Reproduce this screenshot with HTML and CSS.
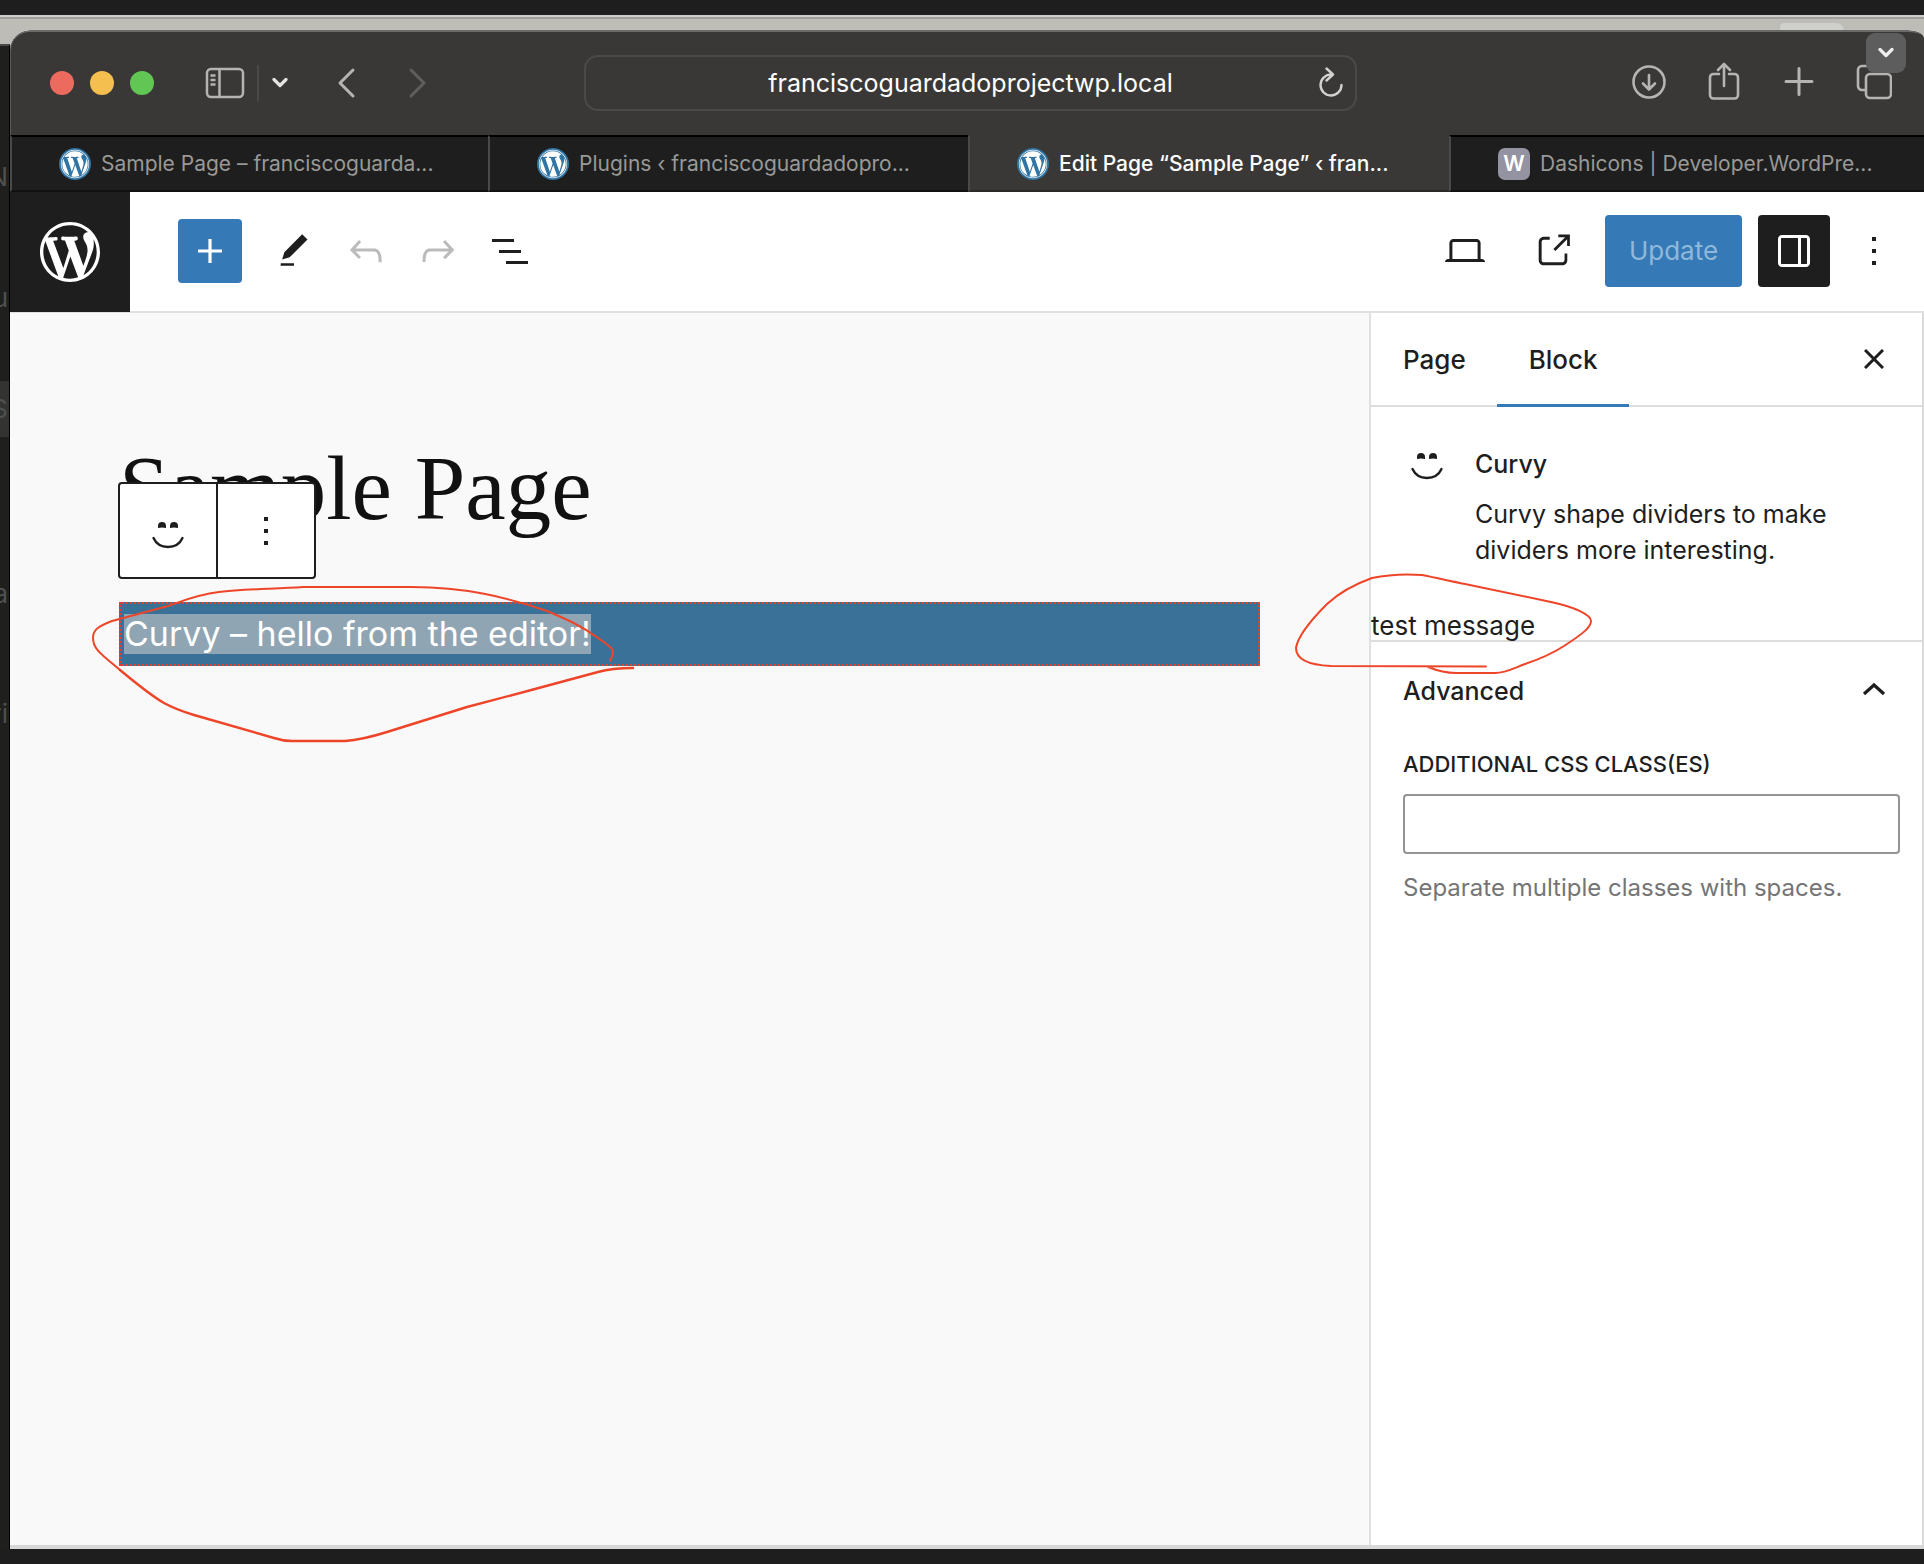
FILE: index.html
```html
<!DOCTYPE html>
<html lang="en">
<head>
<meta charset="utf-8">
<title>Edit Page “Sample Page”</title>
<link rel="stylesheet" href="styles.css">
</head>
<body>
<svg class="defs" aria-hidden="true">
  <symbol id="wp" viewBox="0 0 24 24"><path fill="currentColor" d="M12.158 12.786L9.46 20.625a8.984 8.984 0 0 0 5.526-.144.852.852 0 0 1-.065-.124zM3.009 12a8.993 8.993 0 0 0 5.067 8.092L3.788 8.341A8.952 8.952 0 0 0 3.009 12zm15.06-.454c0-1.112-.399-1.881-.741-2.48-.456-.741-.883-1.368-.883-2.109 0-.826.627-1.596 1.51-1.596.04 0 .078.005.116.007A8.963 8.963 0 0 0 12 3.009a8.982 8.982 0 0 0-7.512 4.052c.211.007.41.011.579.011.94 0 2.396-.114 2.396-.114.484-.028.541.684.057.741 0 0-.487.057-1.029.085l3.274 9.739 1.968-5.901-1.401-3.838c-.484-.028-.943-.085-.943-.085-.485-.029-.428-.769.057-.741 0 0 1.484.114 2.368.114.94 0 2.397-.114 2.397-.114.485-.028.542.684.057.741 0 0-.488.057-1.029.085l3.249 9.665.897-2.996c.456-1.169.684-2.137.684-2.907zm1.82-3.86c.039.286.06.593.06.924 0 .912-.171 1.938-.684 3.22l-2.746 7.94A8.991 8.991 0 0 0 20.991 12a8.95 8.95 0 0 0-1.102-4.314zM12 2C6.486 2 2 6.486 2 12s4.486 10 10 10 10-4.486 10-10S17.514 2 12 2zm0 19.542c-5.26 0-9.542-4.281-9.542-9.542S6.74 2.458 12 2.458 21.542 6.739 21.542 12 17.26 21.542 12 21.542z"/></symbol>
  <symbol id="wpbold" viewBox="-2 -2 24 24"><path fill="currentColor" d="M20 10c0-5.510-4.490-10-10-10C4.480 0 0 4.490 0 10c0 5.520 4.480 10 10 10 5.510 0 10-4.480 10-10zM7.780 15.370L4.370 6.220c.550-.020 1.170-.080 1.170-.080.500-.060.440-1.130-.060-1.110 0 0-1.450.110-2.370.110-.180 0-.370 0-.580-.010C4.120 2.690 6.870 1.110 10 1.110c2.330 0 4.450.870 6.050 2.340-.680-.110-1.650.390-1.650 1.580 0 .740.450 1.360.900 2.100.350.610.550 1.360.550 2.460 0 1.490-1.400 5-1.400 5l-3.030-8.370c.540-.020.820-.170.820-.170.500-.050.440-1.250-.060-1.220 0 0-1.440.120-2.380.120-.870 0-2.330-.120-2.330-.120-.500-.030-.560 1.200-.060 1.220l.920.080 1.260 3.410zM17.410 10c.240-.640.740-1.870.430-4.250.700 1.290 1.050 2.710 1.050 4.250 0 3.290-1.730 6.240-4.400 7.780.970-2.590 1.940-5.200 2.920-7.780zM6.100 18.090C3.120 16.650 1.110 13.530 1.110 10c0-1.300.230-2.480.720-3.590C3.250 10.300 4.670 14.200 6.100 18.090zm4.030-6.630l2.580 6.980c-.860.290-1.760.450-2.710.450-.790 0-1.570-.110-2.290-.330.810-2.380 1.620-4.740 2.420-7.100z"/></symbol>
  <symbol id="smile" viewBox="0 0 48 48"><path fill="currentColor" d="M14 21v-2a4 4 0 0 1 8 0v2q-4-1-8 0zM26 21v-2a4 4 0 0 1 8 0v2q-4-1-8 0z"/><path fill="none" stroke="currentColor" stroke-width="2.400" stroke-linecap="round" d="M9.500 31C15 43 33 43 38.500 31"/></symbol>
  <symbol id="dots" viewBox="0 0 24 24"><path fill="currentColor" d="M13 19h-2v-2h2v2zm0-6h-2v-2h2v2zm0-6h-2V5h2v2z"/></symbol>
</svg>
<div class="desktop">
  <i class="peek"></i>
  <aside class="behind" aria-hidden="true">
    <span class="ghost g1">N</span><span class="ghost g2">u</span><span class="ghost g3 lit">S</span><span class="ghost g4">a</span><span class="ghost g5">ri</span>
  </aside>
  <div class="window">
    <header class="chrome">
      <div class="left">
        <div class="lights"><i class="red"></i><i class="yellow"></i><i class="green"></i></div>
        <button class="tool side" aria-label="Sidebar"><svg width="40" height="32" viewBox="0 0 40 32"><g fill="none" stroke="currentColor" stroke-width="2.500"><rect x="2" y="2" width="36" height="28" rx="4"/><path d="M14.500 2v28M5.500 8.500h5M5.500 13h5M5.500 17.500h5" /></g></svg></button>
        <span class="rule"></span>
        <button class="tool bright" aria-label="Tab groups"><svg width="16" height="12" viewBox="0 0 16 12"><path d="M2 2.500l6 6 6-6" fill="none" stroke="currentColor" stroke-width="3.200" stroke-linecap="round" stroke-linejoin="round"/></svg></button>
        <button class="tool back" aria-label="Back"><svg width="20" height="32" viewBox="0 0 20 32"><path d="M17 3L4 16l13 13" fill="none" stroke="currentColor" stroke-width="3" stroke-linecap="round" stroke-linejoin="round"/></svg></button>
        <button class="tool forward" aria-label="Forward"><svg width="20" height="32" viewBox="0 0 20 32"><path d="M3 3l13 13L3 29" fill="none" stroke="currentColor" stroke-width="3" stroke-linecap="round" stroke-linejoin="round"/></svg></button>
      </div>
      <div class="address">
        <input class="url" aria-label="Address" value="franciscoguardadoprojectwp.local">
        <button class="tool reload" aria-label="Reload"><svg width="28" height="32" viewBox="0 0 28 32"><path d="M14.500 7.500A10.500 10.500 0 1 0 24.500 18M9.500 1.500l6.500 6-6.500 6" fill="none" stroke="currentColor" stroke-width="2.400" stroke-linecap="round" stroke-linejoin="round"/></svg></button>
      </div>
      <div class="right">
        <button class="tool" aria-label="Downloads"><svg width="36" height="40" viewBox="0 0 36 40"><g fill="none" stroke="currentColor" stroke-width="2.600" stroke-linecap="round" stroke-linejoin="round"><circle cx="18" cy="20" r="15.500"/><path d="M18 13v14M12 21.500l6 6 6-6"/></g></svg></button>
        <button class="tool" aria-label="Share"><svg width="36" height="40" viewBox="0 0 36 40"><g fill="none" stroke="currentColor" stroke-width="2.600" stroke-linecap="round" stroke-linejoin="round"><path d="M13 12H7.500a3.500 3.500 0 0 0-3.500 3.500V33a3.500 3.500 0 0 0 3.500 3.500h21A3.500 3.500 0 0 0 32 33V15.500a3.500 3.500 0 0 0-3.500-3.500H23M18 24V2M12 8l6-6 6 6"/></g></svg></button>
        <button class="tool" aria-label="New tab"><svg width="36" height="40" viewBox="0 0 36 40"><path d="M18 6.500v26M5 19.500h26" fill="none" stroke="currentColor" stroke-width="3" stroke-linecap="round"/></svg></button>
        <button class="tool" aria-label="Tab overview"><svg width="36" height="40" viewBox="0 0 36 40"><g fill="none" stroke="currentColor" stroke-width="2.600"><rect x="10" y="12" width="25" height="24" rx="4"/><path d="M10 28H6a4 4 0 0 1-4-4V8a4 4 0 0 1 4-4h16a4 4 0 0 1 4 4v4"/></g></svg></button>
      </div>
      <button class="float" aria-label="Show more"><svg width="16" height="12" viewBox="0 0 16 12"><path d="M2 2.500l6 6 6-6" fill="none" stroke="currentColor" stroke-width="3.200" stroke-linecap="round" stroke-linejoin="round"/></svg></button>
    </header>
    <nav class="tabs">
      <a class="tab" href="#"><span class="fav"><svg><use href="#wp"/></svg></span><span class="name">Sample Page – franciscoguarda...</span></a>
      <a class="tab" href="#"><span class="fav"><svg><use href="#wp"/></svg></span><span class="name">Plugins ‹ franciscoguardadopro...</span></a>
      <a class="tab active" href="#"><span class="fav"><svg><use href="#wp"/></svg></span><span class="name">Edit Page “Sample Page” ‹ fran...</span></a>
      <a class="tab" href="#"><span class="fav letter">W</span><span class="name">Dashicons | Developer.WordPre...</span></a>
    </nav>
    <div class="bar">
      <a class="home" href="#" aria-label="View Pages"><svg width="72" height="72"><use href="#wpbold"/></svg></a>
      <div class="tools">
        <button class="icon insert" aria-label="Add block"><svg width="48" height="48" viewBox="0 0 24 24"><path fill="currentColor" d="M18 11.200h-5.200V6h-1.600v5.200H6v1.600h5.200V18h1.600v-5.200H18z"/></svg></button>
        <button class="icon" aria-label="Tools"><svg width="40" height="40" viewBox="0 0 24 24"><path fill="currentColor" d="M20.100 5.100L16.900 2 6.200 12.700l-1.300 4.400 4.500-1.300L20.100 5.100zM4 20.800h8v-1.500H4v1.500z"/></svg></button>
        <button class="icon off" aria-label="Undo"><svg width="48" height="48" viewBox="0 0 24 24"><path fill="currentColor" d="M18.300 11.700c-.6-.6-1.400-.9-2.300-.9H6.700l2.900-3.300-1.100-1-4.500 5L8.500 16l1-1-2.700-2.700H16c.5 0 .9.200 1.300.5 1 1 1 3.400 1 4.500v.3h1.500v-.2c0-1.500 0-4.300-1.500-5.700z"/></svg></button>
        <button class="icon off" aria-label="Redo"><svg width="48" height="48" viewBox="0 0 24 24"><path fill="currentColor" d="M15.600 6.500l-1.100 1 2.900 3.300H8c-.9 0-1.700.3-2.300.9-1.400 1.500-1.400 4.200-1.400 5.600v.2h1.500v-.3c0-1.100 0-3.500 1-4.500.3-.3.700-.5 1.300-.5h9.200L14.500 15l1.100 1.100 4.600-4.600-4.600-5z"/></svg></button>
        <button class="icon" aria-label="Document overview"><svg width="48" height="48" viewBox="0 0 24 24"><path fill="currentColor" d="M3 6h11v1.500H3V6Zm3.500 5.500h11V13h-11v-1.500ZM21 17H10v1.500h11V17Z"/></svg></button>
      </div>
      <div class="actions">
        <button class="icon wide" aria-label="Preview"><svg width="48" height="48" viewBox="0 0 24 24"><path fill="currentColor" d="M20.500 16h-.7V8c0-1.100-.9-2-2-2H6.200c-1.100 0-2 .900-2 2v8h-.7c-.8 0-1.500.7-1.500 1.500h20c0-.8-.7-1.500-1.500-1.500zM5.700 8c0-.3.200-.5.500-.5h11.600c.3 0 .5.200.5.500v8H5.700V8z"/></svg></button>
        <button class="icon wide" aria-label="View page"><svg width="44" height="44" viewBox="0 0 24 24"><path fill="currentColor" d="M18.200 17c0 .7-.6 1.200-1.200 1.200H7c-.7 0-1.200-.6-1.200-1.200V7c0-.7.6-1.200 1.200-1.200h3.200V4.200H7C5.500 4.200 4.200 5.500 4.200 7v10c0 1.500 1.200 2.800 2.800 2.800h10c1.500 0 2.800-1.200 2.800-2.800v-3.600h-1.500V17zM14.900 3v1.500h3.700l-6.400 6.400 1.100 1.100 6.400-6.400v3.700h1.500V3h-6.300z"/></svg></button>
        <button class="update">Update</button>
        <button class="icon settings" aria-label="Settings"><svg width="48" height="48" viewBox="0 0 24 24"><path fill="currentColor" d="M18 4H6c-1.100 0-2 .900-2 2v12c0 1.100.9 2 2 2h12c1.100 0 2-.900 2-2V6c0-1.100-.900-2-2-2zm-4 14.500H6c-.3 0-.5-.200-.5-.500V6c0-.300.200-.500.500-.500h8v13zm4.500-.500c0 .300-.200.500-.500.500h-2.500v-13H18c.300 0 .500.200.500.500v12z"/></svg></button>
        <button class="icon more" aria-label="Options"><svg width="48" height="48"><use href="#dots"/></svg></button>
      </div>
    </div>
    <div class="body">
      <main class="canvas">
        <h1 class="title">Sample Page</h1>
        <div class="block">
          <div class="toolbar">
            <button aria-label="Curvy"><svg width="48" height="48"><use href="#smile"/></svg></button>
            <button aria-label="Options"><svg width="48" height="48"><use href="#dots"/></svg></button>
          </div>
          <span class="selected">Curvy – hello from the editor!</span>
          <svg class="scribble one" width="570" height="180" viewBox="79 572 570 180"><path d="M610 661C616 650 614 649 598 638C582 626 566 619 547 611C506 597 465 587 412 587H303C275 589 245 589 219 592C195 595 183 601 168 606L112 621C96 627 93 631 93 638C93 649 101 654 120 670"/><path stroke-width="2.400" d="M120 670C137 684 150 695 164 703C175 709 184 712 194 715L274 738Q283 741 292 741H345C360 740 371 737 387 732L467 707L535 689L598 672Q612 668 633 668"/></svg>
        </div>
      </main>
      <aside class="panel">
        <div class="paneltabs">
          <button class="ptab">Page</button><button class="ptab on">Block</button>
          <button class="close" aria-label="Close"><svg width="20" height="20" viewBox="0 0 20 20"><path d="M1 1l18 18M19 1L1 19" stroke="currentColor" stroke-width="3"/></svg></button>
        </div>
        <section class="card">
          <svg width="48" height="48"><use href="#smile"/></svg>
          <div><h2>Curvy</h2><p>Curvy shape dividers to make dividers more interesting.</p></div>
        </section>
        <div class="message">test message
          <svg class="scribble two" width="310" height="110" viewBox="1289 568 310 110"><path d="M1486 665.500L1331 665C1309 664 1296 658 1296 647C1298 634 1314 616 1327 603C1341 590 1358 582 1372 577C1391 573 1409 573 1422 574C1437 577 1450 580 1465 583L1551 601C1575 606 1591 614 1591 620C1591 626 1584 632 1564 645C1550 654 1540 658 1525 663C1512 668 1505 672 1495 672H1456Q1443 672 1428 666"/></svg>
        </div>
        <section class="advanced">
          <button class="toggle">Advanced<svg width="24" height="14" viewBox="0 0 24 14"><path d="M2 12L12 3l10 9" fill="none" stroke="currentColor" stroke-width="3.200"/></svg></button>
          <label for="css">Additional CSS class(es)</label>
          <input id="css" class="field" type="text">
          <p class="help">Separate multiple classes with spaces.</p>
        </section>
      </aside>
    </div>
  </div>
</div>
</body>
</html>
```
FILE: styles.css
```css
* { box-sizing: border-box; }
body { margin: 0; background: #1e1e1e; font-family: Inter, "Liberation Sans", sans-serif; color: #1e1e1e; }
button { border: 0; padding: 0; background: none; color: inherit; font: inherit; display: flex; align-items: center; justify-content: center; }
svg { display: block; flex: none; }
a { text-decoration: none; color: inherit; }
h1, h2, p { margin: 0; }
.defs { position: absolute; width: 0; height: 0; }

.desktop { position: relative; display: flex; height: 100vh; padding: 15px 0; overflow: hidden; background: linear-gradient(#d0cccb 0 2px, #a09e9b 2px 4px, #bdbcb6 4px 30px, #1e1e1e 30px) 0 15px no-repeat #1e1e1e; }
.peek { position: absolute; top: 23px; right: 80px; width: 64px; height: 12px; border-radius: 4px 8px 0 0; background: #cfcfcc; }
.behind { flex: 0 0 10px; margin-top: 29px; border-top: 2px solid #4a4a49; border-right: 1px solid #000; background: #1f1f1d; overflow: hidden; display: flex; flex-direction: column; align-items: flex-end; color: #50504e; font-size: 26px; line-height: 56px; }
.ghost { flex: none; height: 56px; padding-right: 1px; }
.g1 { margin-top: 103px; }
.g2 { margin-top: 65px; }
.g3 { margin-top: 55px; }
.g4 { margin-top: 129px; }
.g5 { margin-top: 64px; }
.lit { width: 10px; background: #333331; display: flex; justify-content: flex-end; }

.window { position: relative; flex: 1; min-width: 0; margin-top: 15px; display: flex; flex-direction: column; border-radius: 20px 16px 0 0 / 20px 8px 0 0; overflow: hidden; background: #fff; border-bottom: 4px solid #d8d8d8; }
.chrome { position: relative; flex: none; height: 105px; background: #393836; border-top: 2px solid #6a6a69; border-left: 1px solid #5a5a58; border-radius: 20px 16px 0 0 / 20px 8px 0 0; display: grid; grid-template-columns: 573px minmax(0, 773px) 1fr; align-items: center; padding-bottom: 2px; color: #b5b4b2; }
.left { display: flex; align-items: center; padding-left: 39px; }
.lights { display: flex; gap: 16px; }
.lights i { width: 24px; height: 24px; border-radius: 50%; }
.red { background: #ed6a5f; }
.yellow { background: #f5bf4f; }
.green { background: #62c655; }
.side { margin-left: 51px; }
.rule { width: 2px; height: 36px; margin: 0 13px 0 12px; background: #4a4947; }
.bright { color: #e4e4e3; }
.back { margin-left: 48px; }
.forward { margin-left: 52px; color: #5f5e5c; }
.address { height: 56px; border: 2px solid #4b4a48; border-radius: 14px; display: flex; align-items: center; padding-right: 10px; }
.url { flex: 1; min-width: 0; height: 48px; padding: 0 0 0 38px; border: 0; outline: 0; background: none; color: #fff; font: 25px Inter, "Liberation Sans", sans-serif; text-align: center; }
.reload { color: #d2d1d0; }
.right { display: flex; justify-content: flex-end; gap: 39px; padding: 0 32px 2px 0; }
.float { position: absolute; right: 18px; top: 1px; width: 40px; height: 40px; border-radius: 9px; background: #5d5d5d; color: #eee; }

.tabs { flex: none; height: 57px; display: grid; grid-template-columns: 478fr 480fr 481fr 475fr; background: #1e1e1e; color: #999998; font-size: 21px; }
.tab { display: flex; align-items: center; gap: 10px; padding-left: 47px; border-top: 2px solid #000; border-bottom: 2px solid #111; border-left: 2px solid #4a4a48; min-width: 0; white-space: nowrap; overflow: hidden; }
.tab.active { background: #393836; color: #fff; border-top-color: #393836; border-bottom-color: #2b2a29; font-weight: 500; }
.fav { flex: none; width: 32px; height: 32px; border-radius: 50%; background: #2f74a3; color: #fff; display: grid; place-items: center; }
.fav svg { width: 34px; height: 34px; margin: -1px; }
.letter { border-radius: 7px; background: #9393a1; font-weight: 600; }

.bar { flex: none; height: 121px; display: flex; align-items: center; border-bottom: 2px solid #e0e0e0; }
.home { align-self: stretch; width: 120px; margin-bottom: -1px; background: #1e1e1e; color: #fff; display: grid; place-items: center; }
.tools { display: flex; gap: 8px; margin-left: 48px; padding-bottom: 2px; }
.icon { width: 64px; height: 64px; border-radius: 4px; }
.insert { background: #357ab7; color: #fff; margin-right: 12px; }
.off { color: #bbb; }
.actions { margin-left: auto; display: flex; align-items: center; gap: 16px; padding: 0 18px 2px 0; }
.wide { width: 72px; }
.update { height: 72px; width: 137px; border-radius: 4px; background: #357ab7; color: #8fb8da; font-size: 26px; }
.settings { width: 72px; height: 72px; margin-right: -4px; background: #1e1e1e; color: #fff; }

.body { flex: 1; min-height: 0; display: grid; grid-template-columns: minmax(0, 1fr) 555px; }
.canvas { background: #f9f9f9; padding: 124px 109px 0; }
.title { font: 400 91px/104px "Liberation Serif", serif; color: #111; }
.block { position: relative; margin-top: 61px; height: 64px; padding: 10px 3px; border: 2px dotted #e8402c; background: #3a7199; color: #fff; font-size: 34px; line-height: 40px; }
.selected { display: inline-block; background: #8fa5b3; }
.toolbar { position: absolute; left: -3px; top: -122px; width: 198px; height: 97px; display: flex; background: #fff; color: #1e1e1e; border: 2px solid #1e1e1e; border-radius: 4px; }
.toolbar button { flex: 1; }
.toolbar button + button { border-left: 2px solid #1e1e1e; }
.scribble { position: absolute; fill: none; stroke: #ee4529; stroke-width: 2; stroke-linecap: round; stroke-linejoin: round; pointer-events: none; }
.one { left: -42px; top: -32px; }

.panel { border-left: 2px solid #e0e0e0; border-right: 2px solid #d8d8d8; background: #fff; font-size: 25px; line-height: 36px; }
.paneltabs { display: flex; height: 94px; border-bottom: 2px solid #ddd; font-size: 26px; }
.ptab { padding: 0 31px 0 32px; height: 94px; font-weight: 500; }
.on { border-bottom: 3px solid #357ab7; border-top: 3px solid transparent; }
.close { margin: 0 38px 0 auto; }
.card { display: flex; gap: 24px; padding: 39px 60px 0 32px; }
.card svg { margin-top: -8px; }
.card h2 { font-size: 25px; line-height: 36px; font-weight: 500; margin-bottom: 14px; }
.message { position: relative; height: 32px; margin-top: 40px; font-size: 26px; }
.two { left: -82px; top: -39px; }
.advanced { border-top: 2px solid #ddd; padding: 0 22px 0 32px; }
.toggle { width: 100%; height: 100px; justify-content: space-between; font-weight: 500; padding: 0 14px 2px 0; }
.toggle svg { margin-bottom: 4px; }
.advanced label { display: block; font-size: 22px; line-height: 28px; font-weight: 500; text-transform: uppercase; margin: 8px 0 16px; }
.field { display: block; width: 100%; height: 60px; border: 2px solid #949494; border-radius: 4px; background: #fff; font: inherit; padding: 0 12px; }
.help { margin-top: 18px; font-size: 24px; line-height: 32px; color: #757575; }
```
